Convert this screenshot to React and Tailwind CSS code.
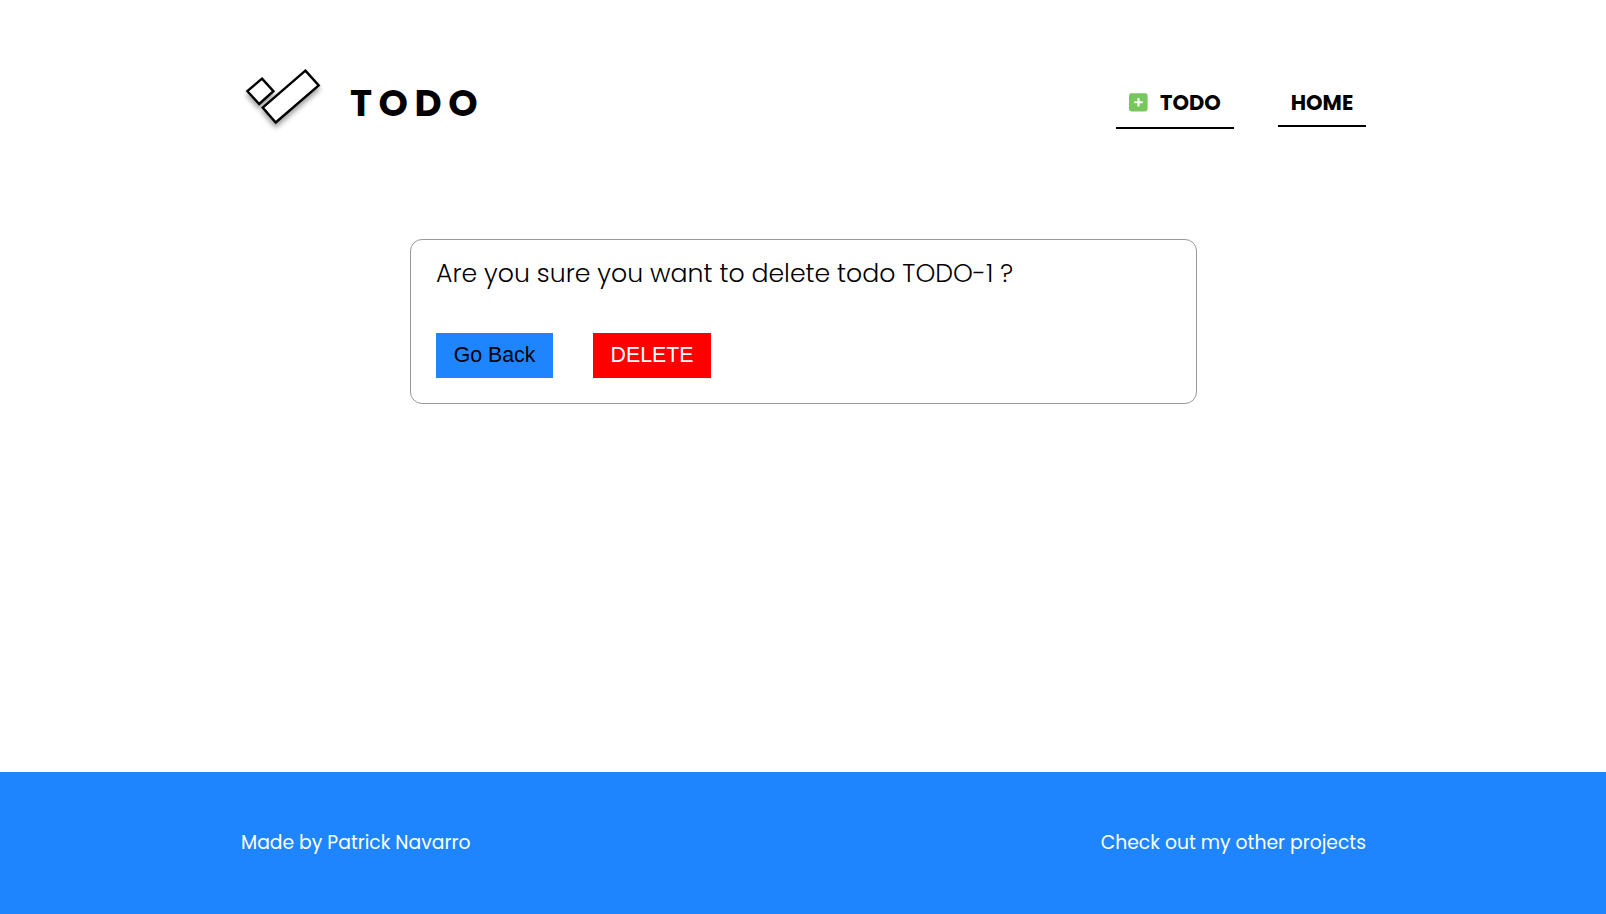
function Logo() {
  return (
    <svg className="h-20 w-[90px] shrink-0" viewBox="0 0 90 80" fill="#fff" stroke="#000" strokeWidth="2.4">
      <defs>
        <filter id="shadow" x="-20%" y="-20%" width="140%" height="150%">
          <feDropShadow dx="0" dy="4" stdDeviation="2.4" floodColor="#000" floodOpacity="0.36" />
        </filter>
      </defs>
      <g filter="url(#shadow)">
        <path d="M21 18.6 32.4 31.2 18.2 44 6.4 31.2Z" />
        <path d="M64.4 10.6 77.7 25.5 34.7 62.5 21.7 47.5Z" />
      </g>
    </svg>
  );
}

function AddIcon() {
  return (
    <svg className="mr-[12px] h-[19px] w-[19px]" viewBox="0 0 19 19">
      <rect x="0" y="0.2" width="18.6" height="18.2" rx="2.4" fill="#77c75c" />
      <path d="M9.5 5v8.6M5.2 9.3h8.6" stroke="#fff" strokeWidth="2" />
    </svg>
  );
}

export default function App() {
  return (
    <div className="flex h-[914px] flex-col bg-white font-[Poppins,Inter,sans-serif] text-black">
      <header className="ml-[241px] flex w-[1125px] items-start justify-between pt-[60px]">
        <div className="flex items-center">
          <Logo />
          <h1 className="mt-[5px] ml-[19px] text-[37.4px] leading-[56px] font-bold tracking-[6.5px]">TODO</h1>
        </div>
        <nav className="mt-[22px] flex items-start text-[21px] leading-[32px] font-bold">
          <a className="mr-11 flex h-[47px] w-[118px] items-start border-b-2 border-black pt-[5px] pl-[13px]">
            <span className="flex items-center">
              <span className="-mt-[2px]">
                <AddIcon />
              </span>
              <span>TODO</span>
            </span>
          </a>
          <a className="flex h-[45px] w-[88px] items-start justify-center border-b-2 border-black pt-[5px]">HOME</a>
        </nav>
      </header>
      <main className="mt-[99px] flex-1">
        <section className="ml-[410px] h-[165px] w-[787px] rounded-xl border border-[#999] pt-[16px] pl-[25px]">
          <p className="text-[25.2px] leading-9 font-light whitespace-nowrap">Are you sure you want to delete todo TODO-1 ?</p>
          <div className="mt-[41px] flex gap-10 font-['Liberation_Sans',Arial,sans-serif] text-[21.3px]">
            <button className="h-[45px] w-[117px] bg-[#1e85ff]">Go Back</button>
            <button className="h-[45px] w-[118px] bg-[#f00] text-white">DELETE</button>
          </div>
        </section>
      </main>
      <footer className="h-[142px] bg-[#1e85ff] text-white">
        <div className="ml-[241px] flex h-full w-[1125px] items-center justify-between text-[18.75px] whitespace-nowrap">
          <p>Made by Patrick Navarro</p>
          <p>Check out my other projects</p>
        </div>
      </footer>
    </div>
  );
}
